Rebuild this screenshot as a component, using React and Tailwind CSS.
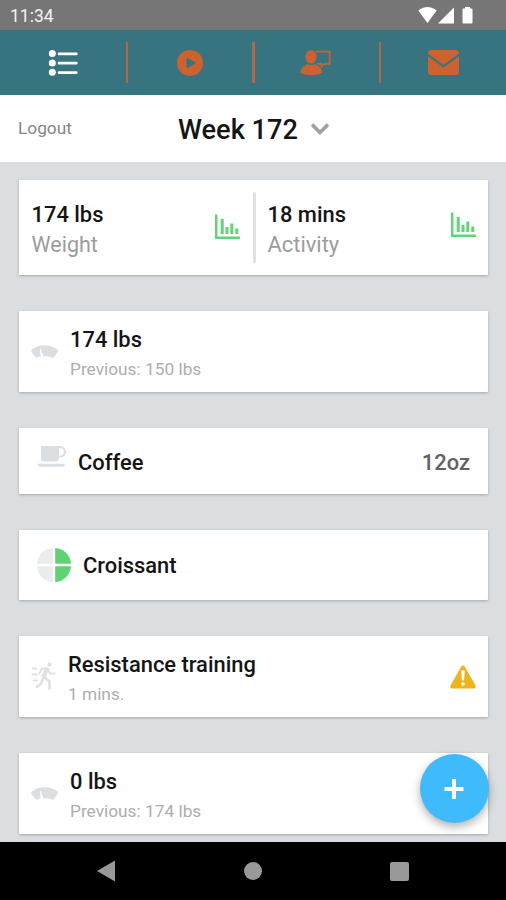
import clsx from "clsx";

// Icon of the weight entries
const ScaleIcon = () => (
  <svg width="28" height="14" viewBox="0 0 28 14" fill="#dcdfe1">
    <path d="M0.500 4.800C4.500 1.700 8.500 0.300 13.500 0.300s9.200 1.400 13.200 4.500c0.600 0.600 0.300 1.400-0.300 2.300-1.100 1.700-2.100 3.200-3.500 4.800-0.600 0.700-1.400 0.900-2.200 0.600-2.200-0.700-4.300-1.200-6.700-1.200h-1.800L9.700 4 9 4.200 9.600 11.500c-1.400 0.200-2.100 0.500-3.100 0.900-0.800 0.300-1.500 0.200-2.100-0.500C3 10.400 1.700 8.800 0.600 7.100 0.100 6.300 0 5.400 0.500 4.800z" />
  </svg>
);

const CupIcon = () => (
  <svg width="30" height="24" viewBox="0 0 30 24">
    <path
      d="M4 2q0-1 1-1h16q1 0 1 1v11a3.500 3.500 0 0 1-3.500 3.500h-11A3.500 3.500 0 0 1 4 13z"
      fill="#dcdfe1"
    />
    <path
      d="M21 2.100h2.300a4.700 4.700 0 0 1 0 9.400H21"
      fill="none"
      stroke="#dcdfe1"
      strokeWidth="2.200"
    />
    <path d="M0.500 18.800h27.500c0 1.900-1.100 2.900-2.700 2.900H3.200c-1.600 0-2.700-1-2.700-2.900z" fill="#dcdfe1" />
  </svg>
);

// Four quarters, the right two are filled
const PortionIcon = () => (
  <svg width="34" height="34" viewBox="0 0 34 34">
    <path d="M15.800 0v15.700H0A16.800 16.800 0 0 1 15.800 0z" fill="#ebedec" />
    <path d="M15.800 34V18.300H0A16.800 16.800 0 0 0 15.800 34z" fill="#ebedec" />
    <path d="M18.200 0v15.700H34A16.800 16.800 0 0 0 18.200 0z" fill="#5fd274" />
    <path d="M18.200 34V18.300H34A16.800 16.800 0 0 1 18.200 34z" fill="#5fd274" />
  </svg>
);

const RunIcon = () => (
  <svg
    width="26"
    height="28"
    viewBox="0 0 26 28"
    fill="none"
    stroke="#dfe1e2"
    strokeWidth="2"
    strokeLinecap="round"
    strokeLinejoin="round"
  >
    <circle cx="18.500" cy="2.500" r="2.200" fill="#dfe1e2" stroke="none" />
    <path d="M1.500 6.500h4M1.500 12.500h4.500M3 18.500h3" strokeWidth="2" />
    <path d="M8.500 11l2.500-4.500h5.500l2.500 5h4.500" strokeWidth="2.200" />
    <path d="M15.500 7.500l-2.700 7" strokeWidth="4.400" />
    <path d="M13 15l5.500 4.500v7M12 16.500l-2 5-4 3.500" strokeWidth="2.600" />
  </svg>
);

const WarningIcon = () => (
  <svg width="28" height="26" viewBox="0 0 28 26">
    <path
      d="M14 3.500L3.200 22.500h21.600z"
      fill="#edb41c"
      stroke="#edb41c"
      strokeWidth="4"
      strokeLinejoin="round"
    />
    <path d="M12.300 6.500h3.400l-0.600 10h-2.200z" fill="#fff" />
    <circle cx="14" cy="20" r="1.800" fill="#fff" />
  </svg>
);

const ChartIcon = ({ className }) => (
  <svg
    width="25"
    height="26"
    viewBox="0 0 25 26"
    fill="none"
    stroke="#62d377"
    className={className}
  >
    <path d="M1.200 0.500v23.300H25" strokeWidth="2.500" />
    <path d="M7.200 5v15M12 13v7M16.800 9.500V20M21.800 14.500V20" strokeWidth="3" />
  </svg>
);

const ListIcon = () => (
  <svg width="30" height="28" viewBox="0 0 30 28" fill="#fff">
    <circle cx="4.300" cy="4.600" r="3.500" />
    <circle cx="4.300" cy="13.900" r="3.500" />
    <circle cx="4.300" cy="23.300" r="3.500" />
    <path
      d="M11 4.900h17.300M11 14.200h17.300M11 23.600h17.300"
      stroke="#fff"
      strokeWidth="2.700"
      strokeLinecap="round"
    />
  </svg>
);

const PlayIcon = () => (
  <svg width="26" height="26" viewBox="0 0 26 26">
    <circle cx="13" cy="13" r="13" fill="#cc622f" />
    <path d="M10 8.300l8.300 4.700-8.300 4.700z" fill="#37747f" stroke="#37747f" strokeLinejoin="round" />
  </svg>
);

const CoachIcon = () => (
  <svg width="32" height="26" viewBox="0 0 32 26">
    <path d="M16 1.600h13.700v12.200h-5.200l-3 2.700v-2.700H17" fill="none" stroke="#cc622f" strokeWidth="1.800" />
    <ellipse cx="11" cy="6.800" rx="5.700" ry="6.600" fill="#cc622f" />
    <path d="M0.500 22.800c0-4.800 3.500-7.500 7.300-8.600 2 1.200 4.500 1.200 6.500 0 4.200 1.100 7.900 3.800 7.900 8.600-2.500 1.700-6.700 2.400-10.900 2.400S2.900 24.500 0.500 22.800z" fill="#cc622f" />
  </svg>
);

const MailIcon = () => (
  <svg width="31" height="25" viewBox="0 0 31 25" fill="#cc622f">
    <path d="M3 0h25a3 3 0 0 1 3 3v0.800L15.500 15 0 3.800V3a3 3 0 0 1 3-3z" />
    <path d="M0 6.300L15.500 17.500 31 6.300V22a3 3 0 0 1-3 3H3a3 3 0 0 1-3-3z" />
  </svg>
);

const tabs = [
  { id: "list", Icon: ListIcon },
  { id: "play", Icon: PlayIcon },
  { id: "coach", Icon: CoachIcon },
  { id: "mail", Icon: MailIcon },
];

const Card = ({ className, children }) => (
  <div
    className={clsx(
      "flex shrink-0 bg-white rounded-[1px] shadow-[0_1px_3px_rgba(0,0,0,0.25)]",
      className
    )}
  >
    {children}
  </div>
);

const Title = ({ className, children }) => (
  <p className={clsx("text-[21.9px] leading-[30px] font-medium text-[#151515] whitespace-nowrap", className)}>
    {children}
  </p>
);

const WeightEntry = ({ value, previous }) => (
  <Card className="h-[81px] pl-3 pt-[14px]">
    <div className="w-[39px] pt-5">
      <ScaleIcon />
    </div>
    <div>
      <Title>{value}</Title>
      <p className="text-[17.3px] leading-[29px] text-[#aeaeae]">Previous: {previous}</p>
    </div>
  </Card>
);

const App = () => {
  return (
    <div className="h-[900px] w-[506px] overflow-hidden flex flex-col bg-[#dadee1] font-['Roboto',sans-serif]">
      {/* Status Bar */}
      <div className="h-[30px] shrink-0 bg-[#767676] flex items-center justify-between pl-[10px] pr-[33px]">
        <p className="text-[17.5px] leading-[30px] text-[#f2f2f2] pt-[2px]">11:34</p>
        <svg width="55" height="18" viewBox="0 0 55 18" fill="#fff">
          <path d="M0.300 4.500C5.500-0.300 13.500-0.300 18.700 4.500L9.500 17z" />
          <path d="M36 1.500V17.500H20z" />
          <path d="M47 1h5v1.500h1.500q1 0 1 1V16.500q0 1-1 1h-8q-1 0-1-1V3.500q0-1 1-1H47z" />
        </svg>
      </div>

      {/* Tabs */}
      <div className="h-[65px] shrink-0 bg-[#37747f] flex">
        {tabs.map(({ id, Icon }, index) => (
          <button key={id} className="flex-1 flex items-center">
            <span className="flex-1 flex justify-center pl-px">
              <Icon />
            </span>
            {index < tabs.length - 1 && <span className="h-[41px] w-[2.5px] -mr-[1.500px] bg-[#b5674b]" />}
          </button>
        ))}
      </div>

      {/* Week Picker */}
      <div className="h-[67px] shrink-0 bg-white flex items-center pl-[18px]">
        <button className="w-40 text-left text-[17.3px] pt-px text-[#868686]">Logout</button>
        <p className="text-[27.2px] pt-[3px] font-medium text-[#151515]">Week 172</p>
        <svg width="20" height="14" viewBox="0 0 20 14" className="ml-3" fill="none">
          <path d="M2 2.500l8 8 8-8" stroke="#a0a0a0" strokeWidth="3.600" />
        </svg>
      </div>

      {/* Entries */}
      <div className="flex-1 overflow-hidden flex flex-col gap-9 pl-[19px] pr-[18px] pt-[18px]">
        <Card className="h-[95px]">
          <div className="flex-1 flex justify-between pl-[12.500px] pr-[13px] pt-5">
            <div>
              <Title>174 lbs</Title>
              <p className="text-[21.5px] leading-[29px] text-[#9c9c9c]">Weight</p>
            </div>
            <ChartIcon className="mt-[14px]" />
          </div>
          <div className="w-[3px] h-[71px] mt-3 rounded bg-[#dfe2e4]" />
          <div className="flex-1 flex justify-between pl-[11.500px] pr-3 pt-5">
            <div>
              <Title>18 mins</Title>
              <p className="text-[21.9px] leading-[29px] text-[#9c9c9c]">Activity</p>
            </div>
            <ChartIcon className="mt-[12px]" />
          </div>
        </Card>

        <WeightEntry value="174 lbs" previous="150 lbs" />

        <Card className="h-[66px] items-center pl-[18px] pr-[18px]">
          <div className="w-[41px] pb-2">
            <CupIcon />
          </div>
          <Title className="flex-1 pt-[3px]">Coffee</Title>
          <p className="text-[21.9px] leading-[30px] pt-[3px] font-medium text-[#626262]">12oz</p>
        </Card>

        <Card className="h-[70px] items-center pl-[18px]">
          <div className="w-[46px]">
            <PortionIcon />
          </div>
          <Title className="pt-px">Croissant</Title>
        </Card>

        <Card className="h-[81px] pl-3 pr-[11px] pt-[14px]">
          <div className="w-[37px] pt-3">
            <RunIcon />
          </div>
          <div className="flex-1">
            <Title>Resistance training</Title>
            <p className="text-[17.3px] leading-[29px] text-[#aeaeae]">1 mins.</p>
          </div>
          <div className="pt-[14px]">
            <WarningIcon />
          </div>
        </Card>

        <WeightEntry value="0 lbs" previous="174 lbs" />
      </div>

      {/* Add Button */}
      <button className="absolute left-[419.500px] top-[754px] size-[69px] rounded-full bg-[#3fbbfb] flex items-center justify-center shadow-[0_4px_10px_rgba(0,0,0,0.3)]">
        <svg width="20" height="20" viewBox="0 0 20 20">
          <path d="M10 0v20M0.500 10h19" stroke="#fff" strokeWidth="4" />
        </svg>
      </button>

      {/* Android Navigation */}
      <div className="h-[58px] shrink-0 bg-black flex items-center justify-between pl-[97px] pr-[97px]">
        <svg width="18" height="22" viewBox="0 0 18 22">
          <path d="M18 0.500v21L0 11z" fill="#999" />
        </svg>
        <span className="size-[18px] rounded-full bg-[#999]" />
        <span className="size-[19px] rounded-[2px] bg-[#999]" />
      </div>
    </div>
  );
};

export default App;
